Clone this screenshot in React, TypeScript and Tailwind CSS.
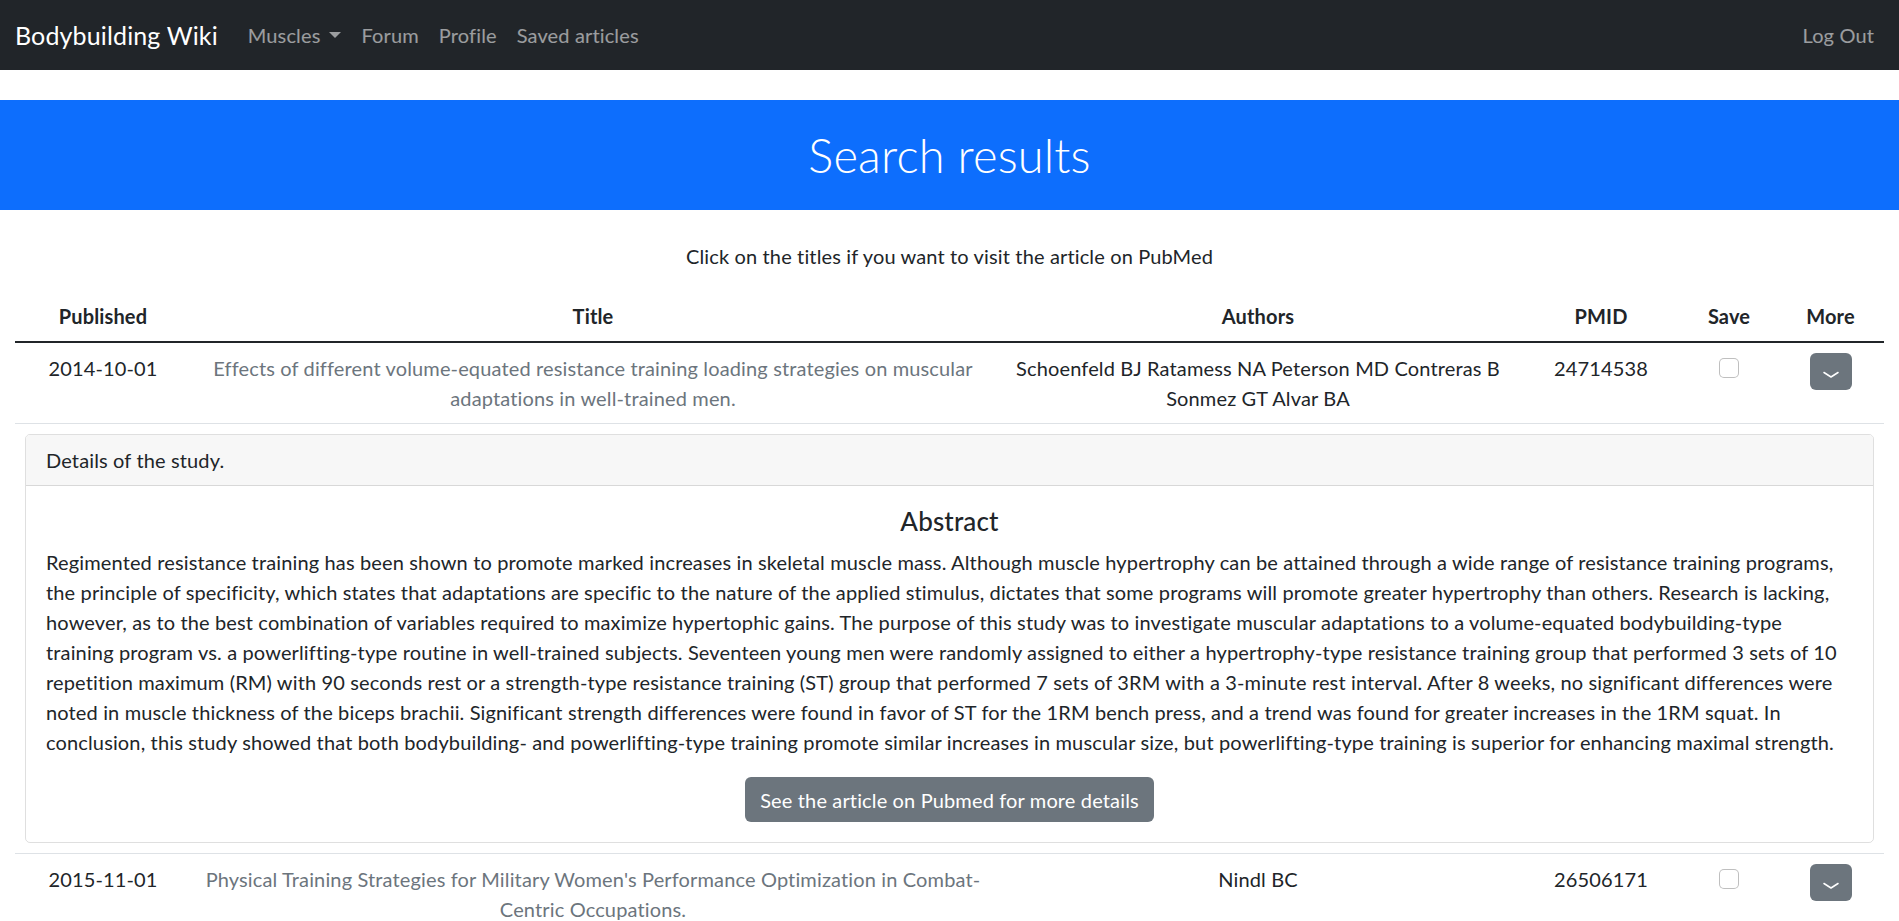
import React from "react";

const articles = [
  {
    published: "2014-10-01",
    title:
      "Effects of different volume-equated resistance training loading strategies on muscular adaptations in well-trained men.",
    authors: "Schoenfeld BJ Ratamess NA Peterson MD Contreras B Sonmez GT Alvar BA",
    pmid: "24714538",
    open: true,
    abstract:
      "Regimented resistance training has been shown to promote marked increases in skeletal muscle mass. Although muscle hypertrophy can be attained through a wide range of resistance training programs, the principle of specificity, which states that adaptations are specific to the nature of the applied stimulus, dictates that some programs will promote greater hypertrophy than others. Research is lacking, however, as to the best combination of variables required to maximize hypertophic gains. The purpose of this study was to investigate muscular adaptations to a volume-equated bodybuilding-type training program vs. a powerlifting-type routine in well-trained subjects. Seventeen young men were randomly assigned to either a hypertrophy-type resistance training group that performed 3 sets of 10 repetition maximum (RM) with 90 seconds rest or a strength-type resistance training (ST) group that performed 7 sets of 3RM with a 3-minute rest interval. After 8 weeks, no significant differences were noted in muscle thickness of the biceps brachii. Significant strength differences were found in favor of ST for the 1RM bench press, and a trend was found for greater increases in the 1RM squat. In conclusion, this study showed that both bodybuilding- and powerlifting-type training promote similar increases in muscular size, but powerlifting-type training is superior for enhancing maximal strength.",
  },
  {
    published: "2015-11-01",
    title:
      "Physical Training Strategies for Military Women's Performance Optimization in Combat-Centric Occupations.",
    authors: "Nindl BC",
    pmid: "26506171",
    open: false,
    abstract: "",
  },
];

const ChevronDown = () => (
  <svg width="16" height="8" viewBox="0 0 16 8" fill="none">
    <polyline points="1,1.5 8,6 15,1.5" stroke="white" strokeWidth="1.5" strokeLinecap="round" strokeLinejoin="round" />
  </svg>
);

export default function App() {
  return (
    <div className="h-screen overflow-hidden bg-white text-[#212529] text-[20px] leading-[30px] tracking-[0.007em] font-['Lato',sans-serif]">
      {/* Navbar */}
      <nav className="bg-[#212529] h-[70px] px-[15px] flex items-center">
        <a className="text-white text-[25px] leading-[37px] mr-[20px]">Bodybuilding Wiki</a>
        <ul className="flex items-center">
          <li className="px-[10px] text-white/55 flex items-center">
            Muscles
            <span className="ml-[9px] inline-block w-0 h-0 border-l-[6px] border-r-[6px] border-t-[6px] border-l-transparent border-r-transparent border-t-white/55" />
          </li>
          <li className="px-[10px] text-white/55">Forum</li>
          <li className="px-[10px] text-white/55">Profile</li>
          <li className="px-[10px] text-white/55">Saved articles</li>
        </ul>
        <div className="ml-auto px-[10px] text-white/55">Log Out</div>
      </nav>

      {/* Banner */}
      <div className="mt-[30px] bg-[#0d6efd] h-[110px] flex items-center justify-center">
        <h1 className="text-white text-[47px] font-light leading-[60px]">Search results</h1>
      </div>

      <div className="px-[15px]">
        <p className="text-center mt-[31px] mb-[20px]">Click on the titles if you want to visit the article on PubMed</p>

        <table className="w-full table-fixed border-collapse">
          <colgroup>
            <col className="w-[176px]" />
            <col className="w-[804px]" />
            <col className="w-[526px]" />
            <col className="w-[160px]" />
            <col className="w-[96px]" />
            <col className="w-[107px]" />
          </colgroup>
          <thead>
            <tr className="border-b-2 border-[#212529]">
              <th className="p-[10px] font-bold text-center">Published</th>
              <th className="p-[10px] font-bold text-center">Title</th>
              <th className="p-[10px] font-bold text-center">Authors</th>
              <th className="p-[10px] font-bold text-center">PMID</th>
              <th className="p-[10px] font-bold text-center">Save</th>
              <th className="p-[10px] font-bold text-center">More</th>
            </tr>
          </thead>
          <tbody>
            {articles.map((a) => (
              <React.Fragment key={a.pmid}>
                <tr className="border-b border-[#dee2e6] align-top text-center">
                  <td className="p-[10px]">{a.published}</td>
                  <td className="p-[10px]">
                    <a className="text-[#6c757d]">{a.title}</a>
                  </td>
                  <td className="p-[10px]">{a.authors}</td>
                  <td className="p-[10px]">{a.pmid}</td>
                  <td className="p-[10px]">
                    <input
                      type="checkbox"
                      className="appearance-none mt-[5px] w-[20px] h-[20px] border border-black/25 rounded-[5px] bg-white align-top"
                    />
                  </td>
                  <td className="p-[10px]">
                    <button className="w-[42px] h-[37px] rounded-[6px] bg-[#6c757d] inline-flex items-center justify-center pt-[6px]">
                      <ChevronDown />
                    </button>
                  </td>
                </tr>
                {a.open && (
                  <tr className="border-b border-[#dee2e6]">
                    <td colSpan={6} className="p-[10px]">
                      <div className="border border-black/[0.125] rounded-[5px] overflow-hidden">
                        <div className="bg-[#f7f7f7] border-b border-black/[0.125] px-[20px] py-[10px]">
                          Details of the study.
                        </div>
                        <div className="p-[20px] text-center">
                          <h4 className="text-[26px] leading-[31px] font-medium mb-[10px]">Abstract</h4>
                          <p className="text-left mb-[20px]">{a.abstract}</p>
                          <button className="bg-[#6c757d] text-white rounded-[6px] px-[15px] py-[7.5px] leading-[30px]">
                            See the article on Pubmed for more details
                          </button>
                        </div>
                      </div>
                    </td>
                  </tr>
                )}
              </React.Fragment>
            ))}
          </tbody>
        </table>
      </div>
    </div>
  );
}
